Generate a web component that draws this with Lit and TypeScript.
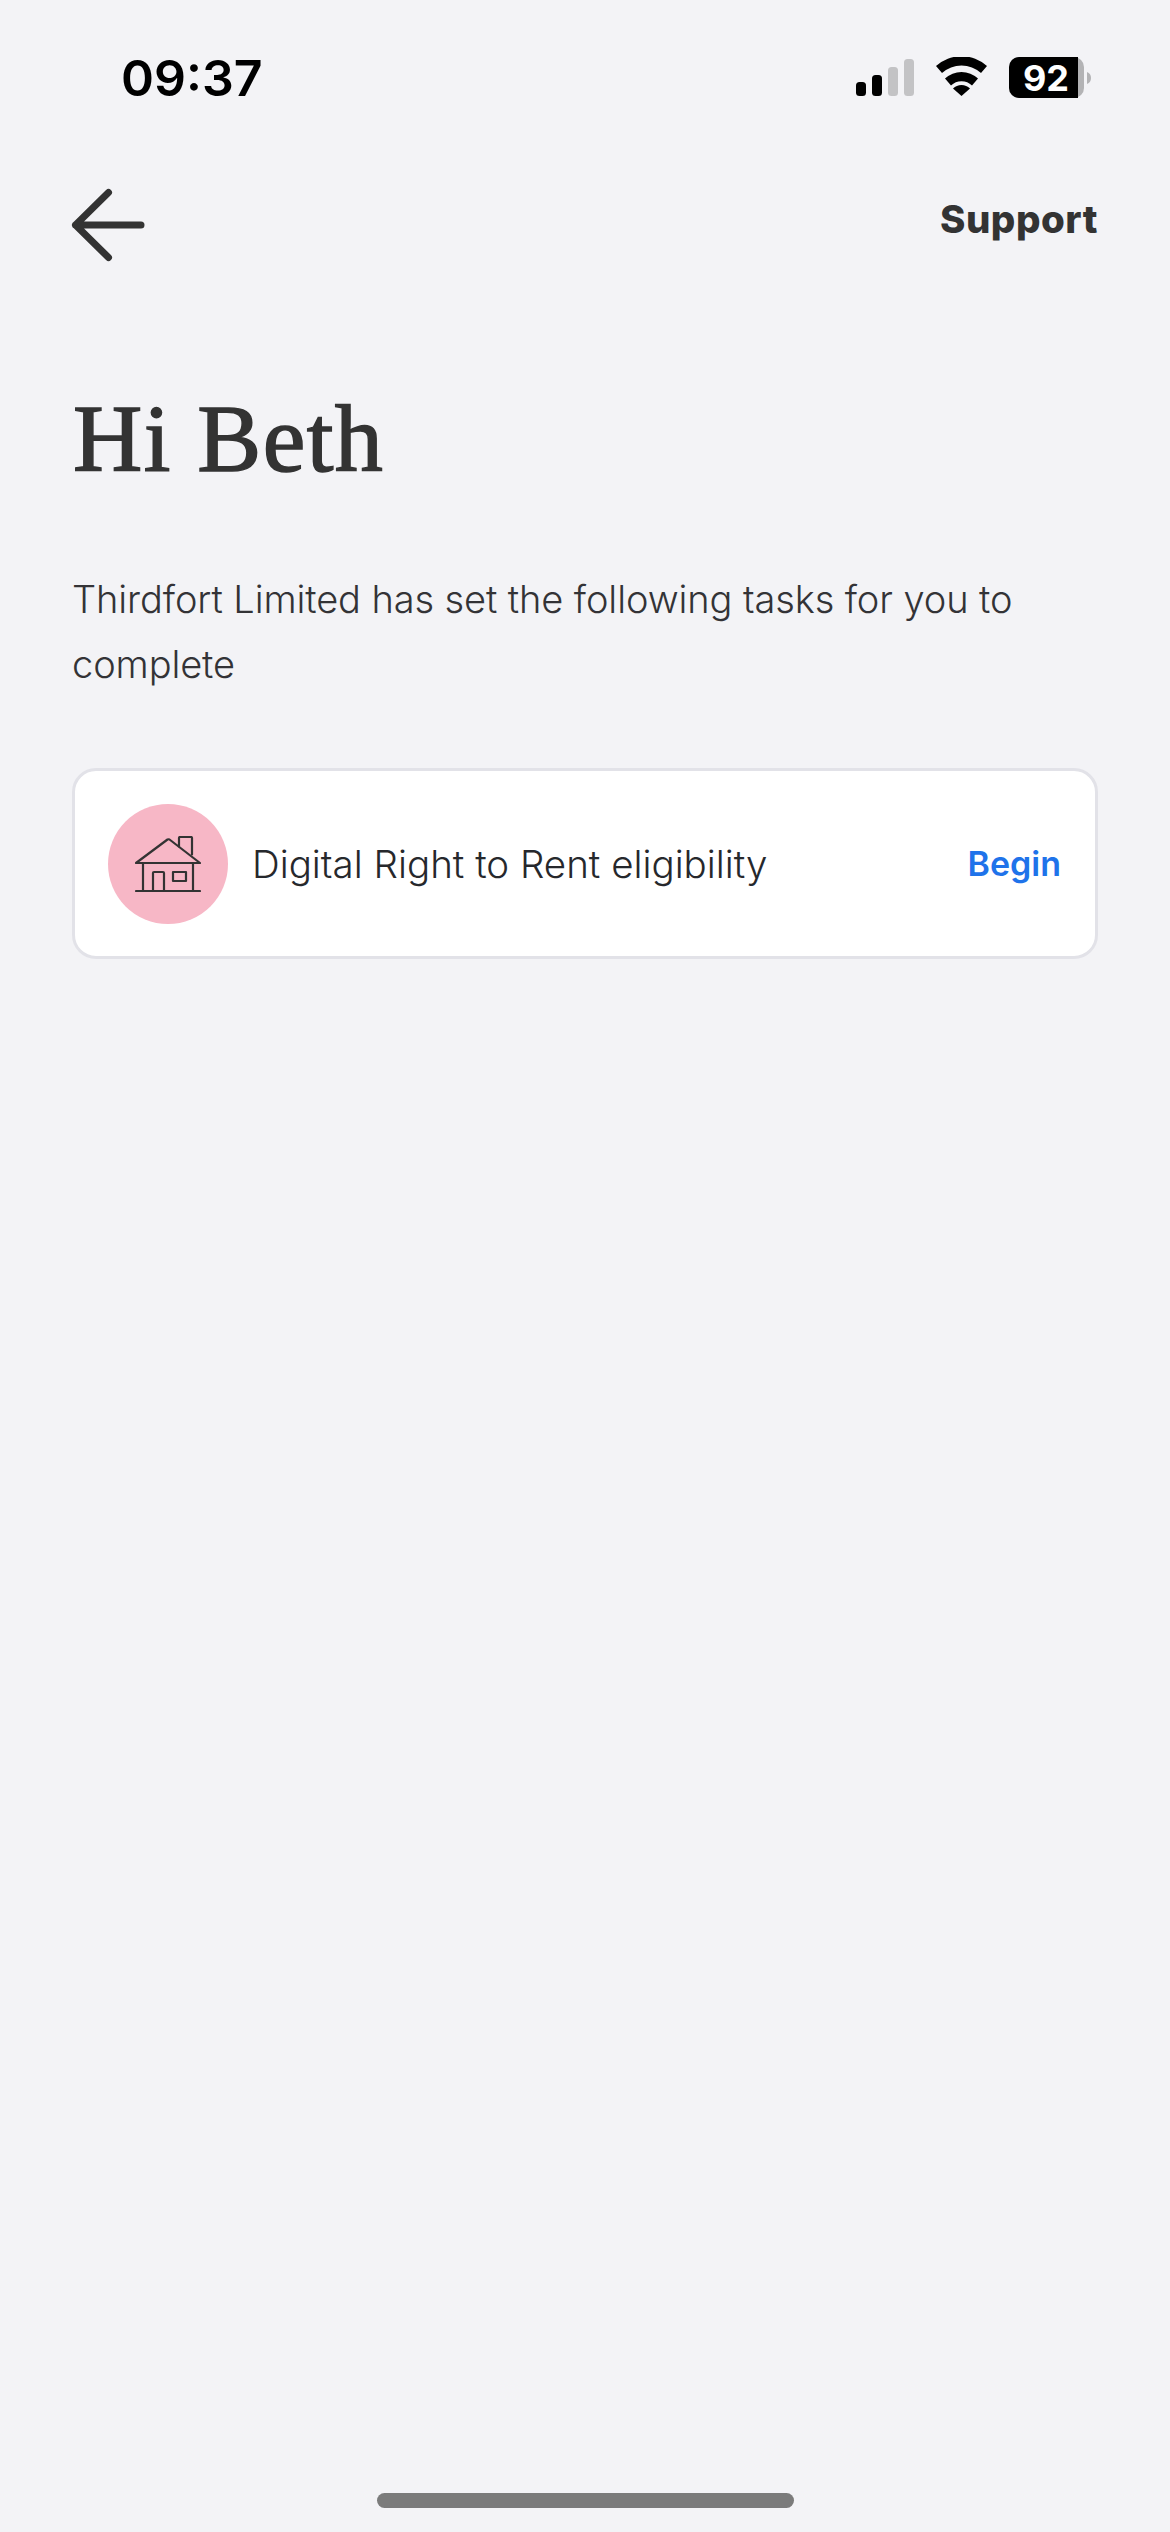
import { LitElement, html, css } from "lit";
import { customElement } from "lit/decorators.js";

@customElement("app-root")
export class AppRoot extends LitElement {
  static styles = css`
    :host { display: block; }
    .page { width: 1170px; height: 2532px; background: #f3f3f6; box-sizing: border-box; display: flex; flex-direction: column; font-family: "Inter", sans-serif; color: #333333; }
    .status { height: 172px; box-sizing: border-box; padding: 52px 79px 0 121px; display: flex; justify-content: space-between; align-items: flex-start; flex: none; }
    .time { font: 600 50px/52px "Inter", sans-serif; color: #000; }
    .status-icons { display: block; margin-top: 5px; }
    .nav { height: 106px; flex: none; display: flex; justify-content: space-between; align-items: center; padding: 0 72px 0 70px; }
    .back { width: 76px; height: 76px; display: block; }
    .support { font: 800 38.5px/44px "Inter", sans-serif; letter-spacing: 0.5px; color: #333333; margin-bottom: 12px; }
    h1 { margin: 0; padding: 106px 73px 0; font: 400 96px/110px "Liberation Serif", serif; letter-spacing: 1.4px; -webkit-text-stroke: 1.5px #333333; color: #333333; flex: none; }
    .intro { margin: 0; padding: 73px 72px 0; font: 300 38px/65px "Inter", sans-serif; letter-spacing: -0.1px; color: #333336; flex: none; }
    .card { margin: 71px 72px 0 72px; height: 191px; box-sizing: border-box; background: #fff; border: 3px solid #e2e2e8; border-radius: 24px; display: flex; align-items: center; padding: 0 34px 0 33px; flex: none; }
    .avatar { width: 120px; height: 120px; border-radius: 50%; background: #f7b7c6; display: flex; align-items: center; justify-content: center; flex: none; }
    .title { margin-left: 24px; flex: 1; font: 300 38.5px/48px "Inter", sans-serif; color: #26282c; }
    .begin { font: 600 34px/44px "Inter", sans-serif; color: #1f73ea; }
    .spacer { flex: 1; }
    .home { width: 417px; height: 15px; border-radius: 8px; background: #7b7b7b; margin: 0 auto 24px; flex: none; }
  `;

  render() {
    return html`
      <div class="page">
        <div class="status">
          <div class="time">09:37</div>
          <svg class="status-icons" width="235" height="44" viewBox="0 0 235 44">
            <rect x="0" y="25" width="10" height="14" rx="3.5" fill="#000" />
            <rect x="16" y="18" width="10" height="21" rx="3.5" fill="#000" />
            <rect x="32" y="10" width="10" height="29" rx="3.5" fill="#c3c3c5" />
            <rect x="48" y="2" width="10" height="37" rx="3.5" fill="#c3c3c5" />
            <path d="M80 14 A38 38 0 0 1 131 14 L125 21 A29 29 0 0 0 86 21 Z" fill="#000" transform="translate(0 -5)"/>
            <path d="M89 26 A24 24 0 0 1 122 26 L116 33 A15 15 0 0 0 95 33 Z" fill="#000" transform="translate(0 -4.5)"/>
            <path d="M105.500 39 L97 31.500 A12 12 0 0 1 114 31.500 Z" fill="#000" />
            <rect x="153" y="0" width="75" height="41" rx="10" fill="#b3b3b5" />
            <path d="M163 0 H222 V41 H163 A10 10 0 0 1 153 31 V10 A10 10 0 0 1 163 0 Z" fill="#000" />
            <path d="M231 15 A6.500 6.500 0 0 1 231 27 Z" fill="#b3b3b5" />
            <text x="190" y="34" text-anchor="middle" font-family="Inter, sans-serif" font-weight="700" font-size="36" fill="#fff">92</text>
          </svg>
        </div>
        <div class="nav">
          <svg class="back" viewBox="0 0 76 76" fill="none" stroke="#333" stroke-width="7" stroke-linecap="round" stroke-linejoin="round">
            <path d="M5.500 38 H71 M38.500 5.500 L5.500 38 L38.500 70.500" />
          </svg>
          <div class="support">Support</div>
        </div>
        <h1>Hi Beth</h1>
        <p class="intro">Thirdfort Limited has set the following tasks for you to<br />complete</p>
        <div class="card">
          <div class="avatar">
            <svg width="66" height="56" viewBox="0 0 66 56" fill="none" stroke="#333" stroke-width="2.2" stroke-linecap="round" stroke-linejoin="round">
              <path d="M1 27 L32.500 3.500 Q33.500 3 34.500 3.500 L65 27 Z" />
              <path d="M44 10.500 V2 Q44 1 45 1 H56 Q57 1 57 2 V18.500" />
              <path d="M8 27 V55 M58 27 V55 M1 55 H65" />
              <path d="M18 55 V37 Q18 36 19 36 H28 Q29 36 29 37 V55" />
              <rect x="38" y="36" width="13" height="9" />
            </svg>
          </div>
          <div class="title">Digital Right to Rent eligibility</div>
          <div class="begin">Begin</div>
        </div>
        <div class="spacer"></div>
        <div class="home"></div>
      </div>
    `;
  }
}
